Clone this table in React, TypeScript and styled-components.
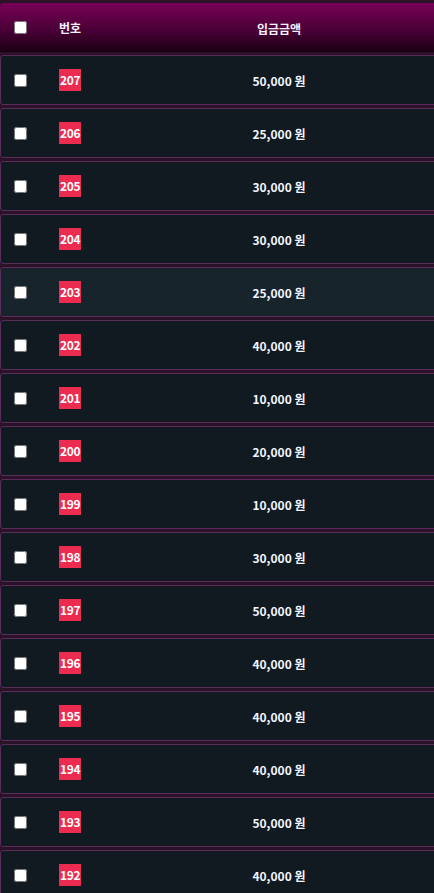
import React from 'react';
import styled, {createGlobalStyle} from 'styled-components';

const GlobalStyle = createGlobalStyle`
  html, body {
    margin: 0;
    padding: 0;
    background: #2b1229;
    overflow: hidden;
  }
  body {
    font-family: "Noto Sans CJK KR", "Noto Sans", sans-serif;
  }
`;

const Table = styled.div`
  width: 470px;
  padding-top: 3px;
  display: flex;
  flex-direction: column;
  gap: 3px;
`;

const Head = styled.div`
  display: grid;
  grid-template-columns: 59px 120px 200px 1fr;
  align-items: center;
  height: 49px;
  border-radius: 4px 4px 0 0;
  background: linear-gradient(to bottom, #780057 0%, #4a0037 55%, #1c0014 100%);
  color: #f4f2ff;
  font-size: 12px;
  font-weight: 700;
`;

const Row = styled.div<{$hover?: boolean}>`
  display: grid;
  grid-template-columns: 58px 120px 200px 1fr;
  align-items: center;
  height: 48px;
  border: 1px solid #5a2c5c;
  border-radius: 3px;
  background: ${p => (p.$hover ? '#17242c' : '#101a20')};
  color: #f4f6ff;
  font-size: 12px;
  font-weight: 700;
`;

const CheckCell = styled.div<{$inset: number}>`
  display: flex;
  align-items: center;
  padding-left: ${p => p.$inset}px;
`;

const Check = styled.input`
  width: 13px;
  height: 13px;
  margin: 0;
`;

const NumCell = styled.div`
  display: flex;
  align-items: center;
`;

const Badge = styled.span`
  display: inline-block;
  background: #ec2b50;
  color: #fff;
  padding: 0 1px;
  line-height: 22px;
  font-size: 12px;
  font-weight: 700;
  letter-spacing: -0.3px;
`;

const Center = styled.div`
  text-align: center;
  padding-top: 1px;
`;

const rows = [
  [207, '50,000'],
  [206, '25,000'],
  [205, '30,000'],
  [204, '30,000'],
  [203, '25,000'],
  [202, '40,000'],
  [201, '10,000'],
  [200, '20,000'],
  [199, '10,000'],
  [198, '30,000'],
  [197, '50,000'],
  [196, '40,000'],
  [195, '40,000'],
  [194, '40,000'],
  [193, '50,000'],
  [192, '40,000'],
] as const;

export default function App() {
  return (
    <>
      <GlobalStyle/>
      <Table>
        <Head>
          <CheckCell $inset={14}><Check type="checkbox"/></CheckCell>
          <div>번호</div>
          <Center>입금금액</Center>
          <div/>
        </Head>
        {rows.map(([no, amount]) => (
          <Row key={no} $hover={no === 203}>
            <CheckCell $inset={13}><Check type="checkbox"/></CheckCell>
            <NumCell><Badge>{no}</Badge></NumCell>
            <Center>{amount} 원</Center>
            <div/>
          </Row>
        ))}
      </Table>
    </>
  );
}
